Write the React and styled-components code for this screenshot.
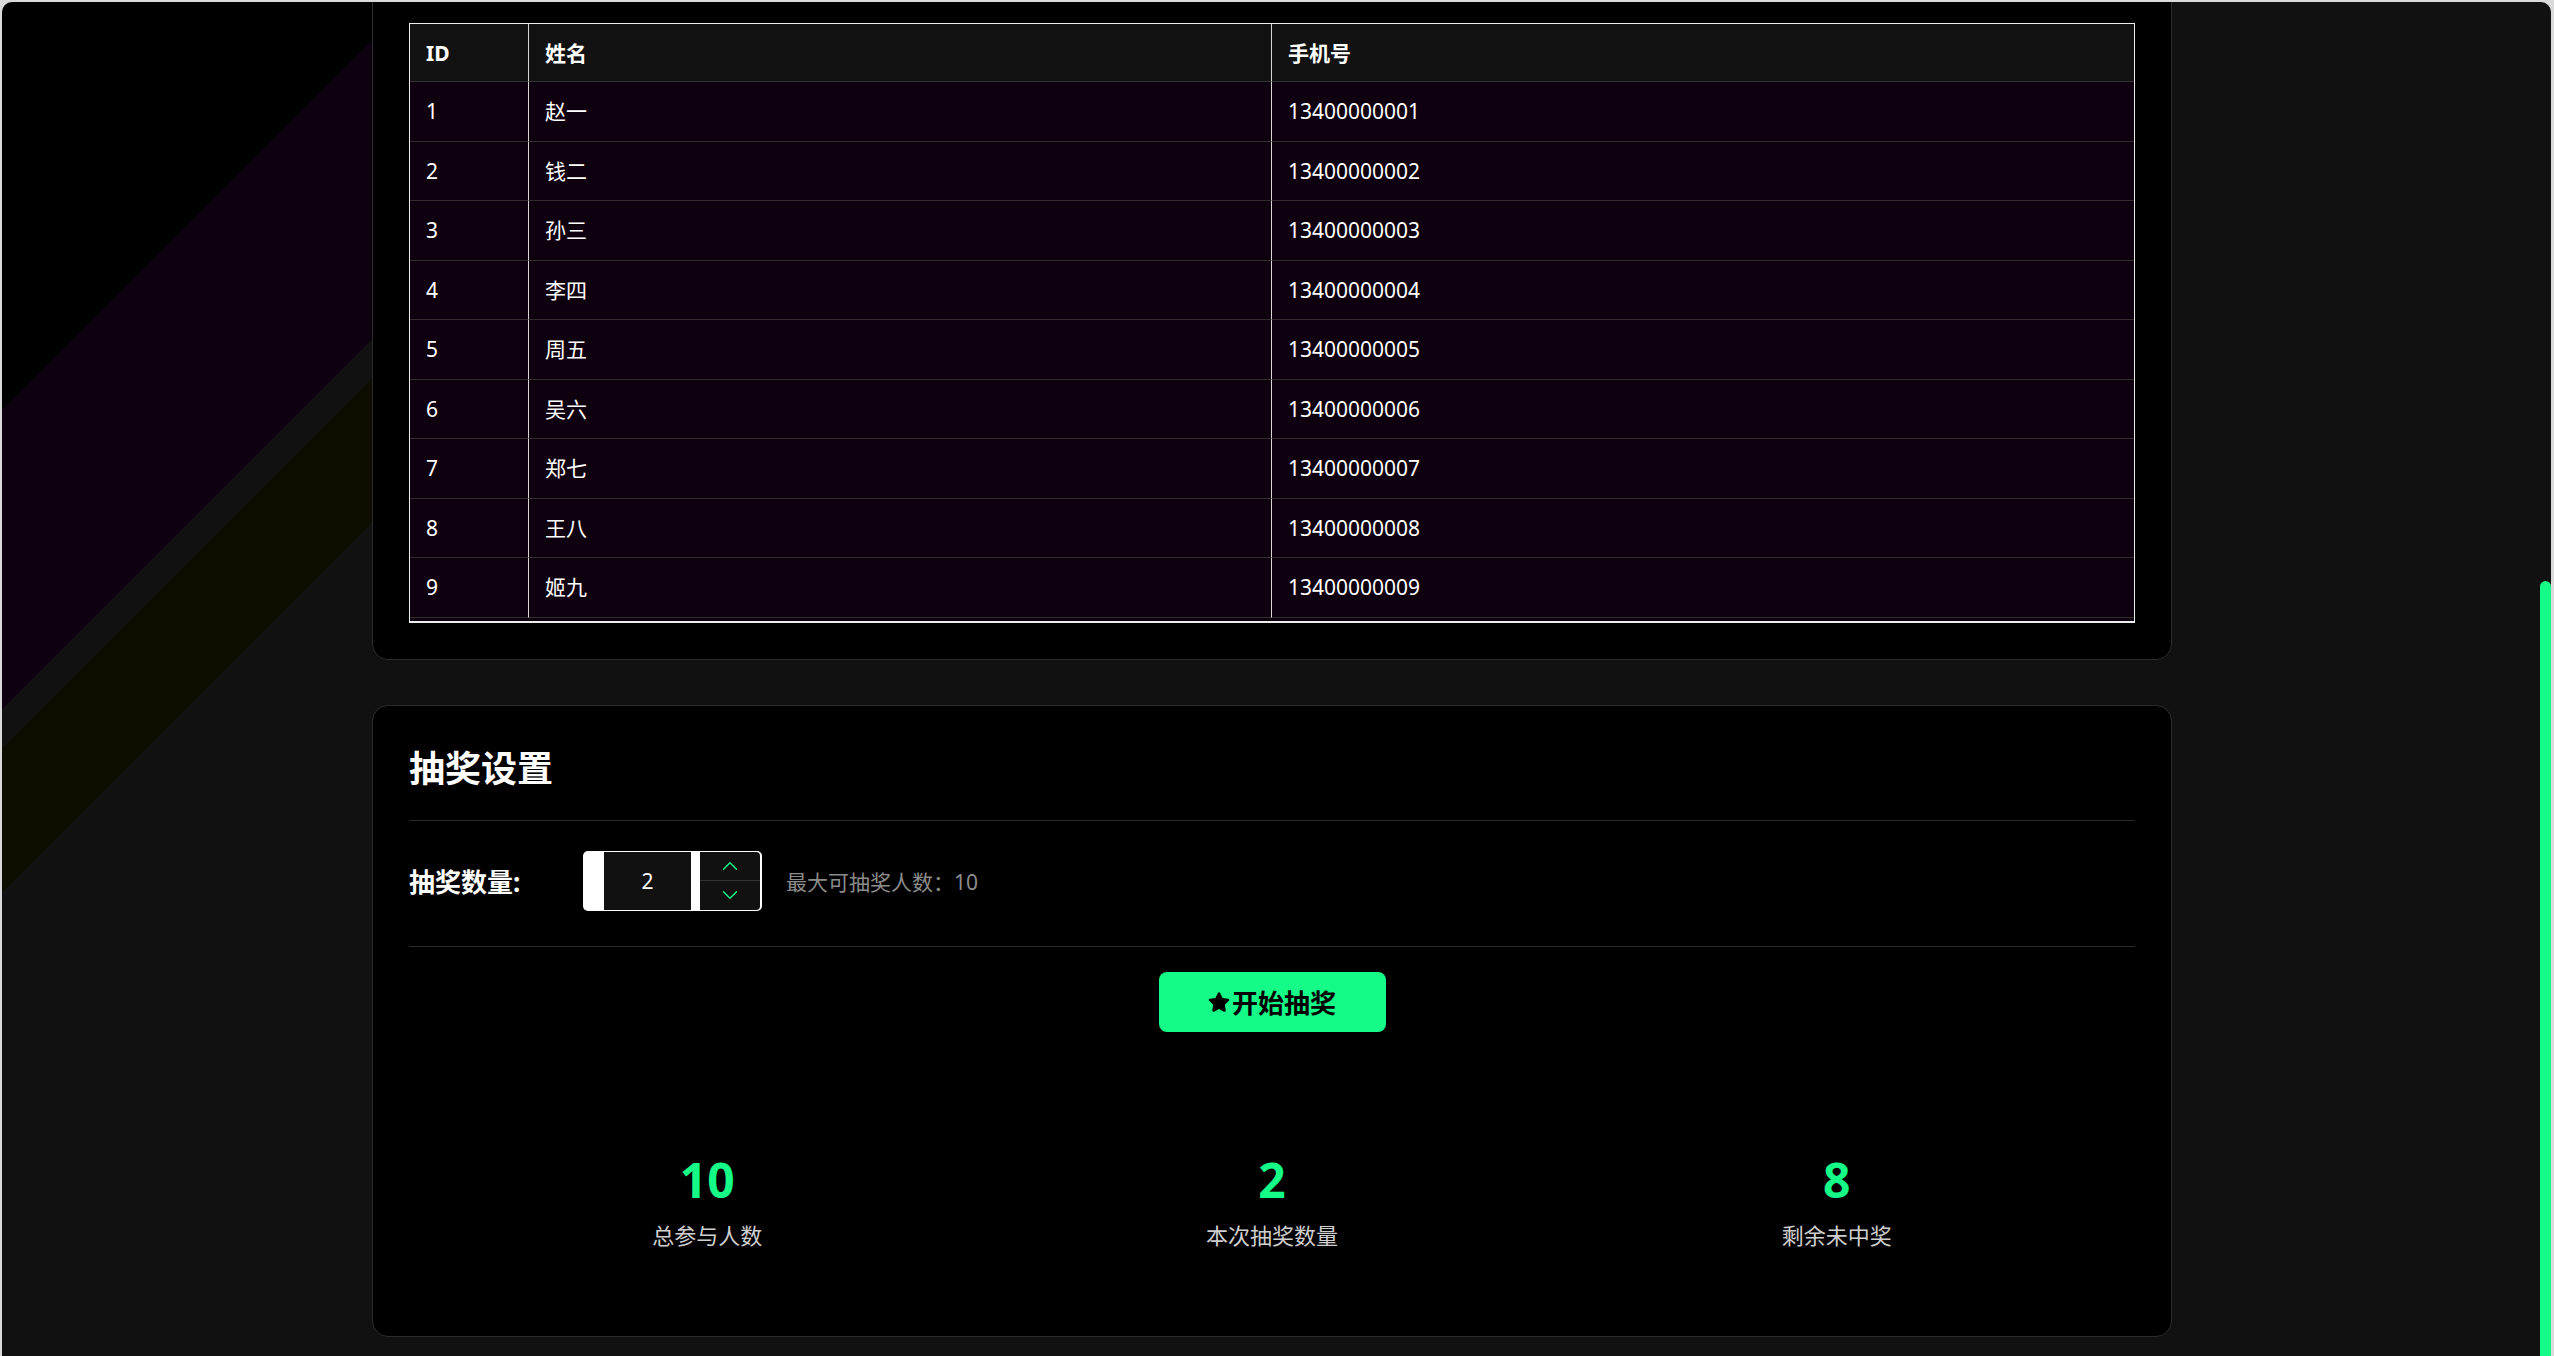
import React, { useState } from 'react';
import styled, { createGlobalStyle } from 'styled-components';
import { FaStar } from 'react-icons/fa';
import { ChevronUp, ChevronDown } from 'lucide-react';

const GREEN = '#14fb87';
const TOTAL = 10;

const participants = [
  { id: 1, name: '赵一', phone: '13400000001' },
  { id: 2, name: '钱二', phone: '13400000002' },
  { id: 3, name: '孙三', phone: '13400000003' },
  { id: 4, name: '李四', phone: '13400000004' },
  { id: 5, name: '周五', phone: '13400000005' },
  { id: 6, name: '吴六', phone: '13400000006' },
  { id: 7, name: '郑七', phone: '13400000007' },
  { id: 8, name: '王八', phone: '13400000008' },
  { id: 9, name: '姬九', phone: '13400000009' },
];

const GlobalStyle = createGlobalStyle`
  * {
    box-sizing: border-box;
  }
  html,
  body {
    margin: 0;
    height: 100%;
    overflow: hidden;
    background: #dadada;
  }
  body {
    font-family: "Noto Sans", "Noto Sans CJK SC", sans-serif;
    color: #fff;
  }
`;

function App() {
  const [count, setCount] = useState(2);

  return (
    <>
      <GlobalStyle />
      <Frame>
        <Main>
          <Card $flush>
            <TableScroll>
              <Table>
                <thead>
                  <tr>
                    <Th $width="118px">ID</Th>
                    <Th $width="743px">姓名</Th>
                    <Th>手机号</Th>
                  </tr>
                </thead>
                <tbody>
                  {participants.map(p => (
                    <tr key={p.id}>
                      <Td>{p.id}</Td>
                      <Td>{p.name}</Td>
                      <Td>{p.phone}</Td>
                    </tr>
                  ))}
                </tbody>
              </Table>
            </TableScroll>
          </Card>

          <Card>
            <CardTitle>抽奖设置</CardTitle>
            <SettingRow>
              <SettingLabel>抽奖数量:</SettingLabel>
              <NumberBox>
                <NumberValue>{count}</NumberValue>
                <Stepper>
                  <StepButton onClick={() => setCount(Math.min(TOTAL, count + 1))}>
                    <ChevronUp size={26} strokeWidth={1.3} />
                  </StepButton>
                  <StepButton onClick={() => setCount(Math.max(1, count - 1))}>
                    <ChevronDown size={26} strokeWidth={1.3} />
                  </StepButton>
                </Stepper>
              </NumberBox>
              <Hint>最大可抽奖人数：{TOTAL}</Hint>
            </SettingRow>
            <Actions>
              <DrawButton>
                <FaStar size={22} />
                开始抽奖
              </DrawButton>
            </Actions>
            <Stats>
              <StatItem>
                <StatValue>{TOTAL}</StatValue>
                <StatLabel>总参与人数</StatLabel>
              </StatItem>
              <StatItem>
                <StatValue>{count}</StatValue>
                <StatLabel>本次抽奖数量</StatLabel>
              </StatItem>
              <StatItem>
                <StatValue>{TOTAL - count}</StatValue>
                <StatLabel>剩余未中奖</StatLabel>
              </StatItem>
            </Stats>
          </Card>
        </Main>
        <ScrollThumb />
      </Frame>
    </>
  );
}

export default App;

const Frame = styled.div`
  position: relative;
  margin: 2px 3px 0 2px;
  height: calc(100vh - 2px);
  padding-right: 9px;
  border-radius: 10px 10px 0 0;
  overflow: hidden;
  background: linear-gradient(
    135deg,
    #000 0 288px,
    #0d000f 288px 500px,
    #111 500px 528px,
    #0d0d00 528px 630px,
    #111 630px
  );
`;

const Main = styled.main`
  width: 1800px;
  margin: 0 auto;
  padding-bottom: 22px;
`;

const Card = styled.section`
  margin-top: ${props => (props.$flush ? '-16px' : '45px')};
  padding: 36px;
  background: #000;
  border: 1px solid #2c2c2c;
  border-radius: 16px;
`;

/* last row sits 3px above the frame edge, as in a scrolled list */
const TableScroll = styled.div`
  padding-bottom: 3px;
  background: #0f0010;
  border: 1px solid #ececec;
  border-bottom-width: 2px;
`;

const Table = styled.table`
  width: 100%;
  table-layout: fixed;
  border-collapse: separate;
  border-spacing: 0;
  font-size: 21px;
  line-height: 30px;
`;

const Th = styled.th`
  width: ${props => props.$width || 'auto'};
  padding: 13.5px 16px;
  text-align: left;
  font-weight: 700;
  background: #121212;
  border-bottom: 1px solid #333;

  & + & {
    border-left: 1px solid #d8d8d8;
  }
`;

const Td = styled.td`
  padding: 14.25px 16px;
  background: #0f0010;
  border-bottom: 1px solid #2e2e2e;

  & + & {
    border-left: 1px solid #d8d8d8;
  }
`;

const CardTitle = styled.h2`
  margin: 0;
  padding-bottom: 24px;
  font-size: 36px;
  line-height: 54px;
  font-weight: 700;
  border-bottom: 1px solid #2a2a2a;
`;

const SettingRow = styled.div`
  display: flex;
  align-items: center;
  padding: 30px 0 35px;
  border-bottom: 1px solid #2a2a2a;
`;

const SettingLabel = styled.span`
  width: 174px;
  font-size: 26px;
  font-weight: 700;
`;

const NumberBox = styled.div`
  display: flex;
  gap: 9px;
  height: 60px;
  padding: 1px 2px 1px 21px;
  background: #fff;
  border-radius: 5px;
`;

const NumberValue = styled.div`
  width: 87px;
  display: flex;
  align-items: center;
  justify-content: center;
  background: #111;
  font-size: 21px;
`;

const Stepper = styled.div`
  width: 60px;
  display: flex;
  flex-direction: column;
  background: #111;
  border-radius: 0 4px 4px 0;
`;

const StepButton = styled.button`
  flex: 1;
  display: flex;
  align-items: center;
  justify-content: center;
  padding: 0;
  color: ${GREEN};
  background: transparent;
  border: none;
  cursor: pointer;

  &:first-child {
    border-bottom: 1px solid #333;
  }
`;

const Hint = styled.span`
  margin-left: 24px;
  font-size: 21px;
  color: #8c8c8c;
`;

const Actions = styled.div`
  display: flex;
  justify-content: center;
  margin-top: 25px;
`;

const DrawButton = styled.button`
  width: 227px;
  height: 60px;
  display: flex;
  align-items: center;
  justify-content: center;
  gap: 2px;
  font-family: inherit;
  font-size: 26px;
  font-weight: 700;
  color: #000;
  background: ${GREEN};
  border: none;
  border-radius: 8px;
  cursor: pointer;
`;

const Stats = styled.div`
  display: grid;
  grid-template-columns: repeat(3, 1fr);
  gap: 32px;
  padding: 119px 32px 48px;
`;

const StatItem = styled.div`
  text-align: center;
`;

const StatValue = styled.div`
  font-size: 48px;
  line-height: 1.2;
  font-weight: 700;
  color: ${GREEN};
`;

const StatLabel = styled.div`
  margin-top: 11px;
  font-size: 22px;
  line-height: 33px;
  color: #cfcfcf;
`;

const ScrollThumb = styled.div`
  position: absolute;
  top: 579px;
  right: 0;
  bottom: 0;
  width: 11px;
  background: ${GREEN};
  border-radius: 6px 6px 0 0;
`;
